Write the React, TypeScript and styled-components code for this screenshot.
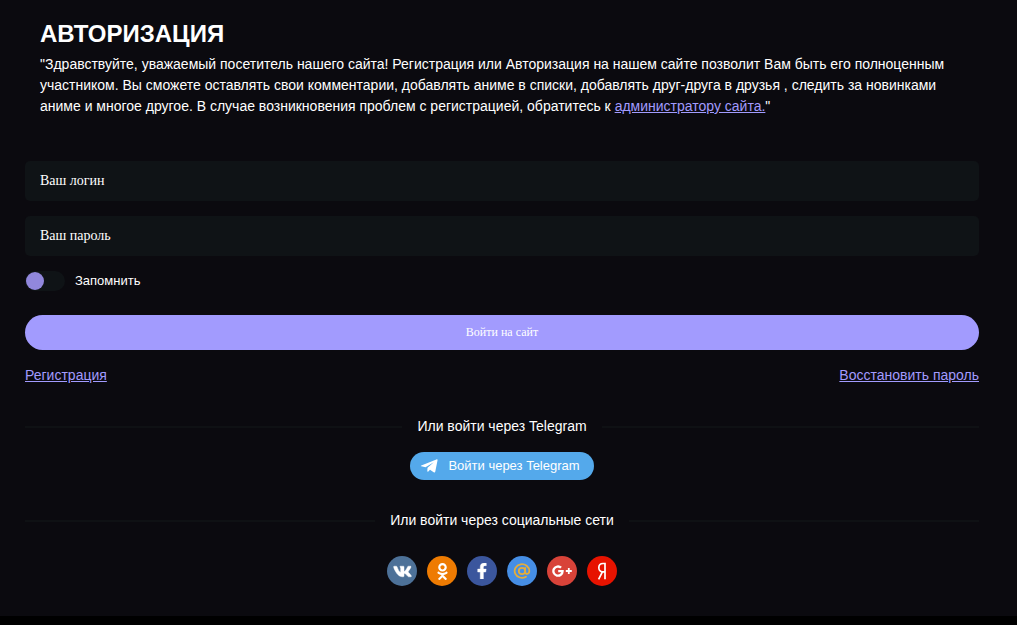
import React from "react";
import styled, { createGlobalStyle } from "styled-components";
import { FaVk, FaOdnoklassniki, FaFacebookF } from "react-icons/fa";

const GlobalStyle = createGlobalStyle`
  * { box-sizing: border-box; }
  body {
    margin: 0;
    background: #000;
    color: #fff;
    font: 14px/21px "Liberation Sans", Arial, sans-serif;
  }
`;

const Page = styled.main`
  background: #0b0a0f;
  padding: 19px 38px 30px 25px;
`;

const Intro = styled.header`
  padding: 0 15px;
`;

const Title = styled.h1`
  margin: 0 0 5px;
  font-size: 24px;
  line-height: 30px;
  text-transform: uppercase;
`;

const Text = styled.p`
  margin: 0;
`;

const Link = styled.a`
  color: #a29bfe;
  text-decoration: underline;
`;

const Form = styled.form`
  display: flex;
  flex-direction: column;
  gap: 15px;
  margin-top: 44px;
`;

const Field = styled.input`
  width: 100%;
  height: 40px;
  padding: 0 15px;
  border: 0;
  border-radius: 5px;
  background: #0f1316;
  color: #fff;
  font: 14px "Liberation Serif", "Times New Roman", serif;
  &::placeholder {
    color: #fff;
    opacity: 1;
  }
`;

const Remember = styled.label`
  display: flex;
  align-items: flex-start;
  align-self: flex-start;
  gap: 10px;
  height: 20px;
  font-size: 13px;
  line-height: 19px;
  cursor: pointer;
`;

const Toggle = styled.input`
  appearance: none;
  display: flex;
  align-items: center;
  width: 40px;
  height: 20px;
  margin: 0;
  padding: 1px;
  border-radius: 10px;
  background: #0f1316;
  cursor: pointer;
  &::before {
    content: "";
    width: 18px;
    height: 18px;
    border-radius: 50%;
    background: #9187dc;
  }
  &:checked {
    justify-content: flex-end;
  }
`;

const Submit = styled.button`
  height: 35px;
  margin-top: 9px;
  border: 0;
  border-radius: 18px;
  background: #a29bfe;
  color: #fff;
  font: 12px "Liberation Serif", "Times New Roman", serif;
  cursor: pointer;
`;

const Links = styled.nav`
  display: flex;
  justify-content: space-between;
`;

const Divider = styled.h2`
  display: flex;
  align-items: center;
  gap: 15px;
  margin: 30px 0 15px;
  font-size: 14px;
  font-weight: 400;
  line-height: 21px;
  &::before,
  &::after {
    content: "";
    flex: 1;
    height: 2px;
    background: #0f1114;
  }
`;

const Center = styled.div`
  display: flex;
  justify-content: center;
  gap: 10px;
`;

const TelegramButton = styled.button`
  display: flex;
  align-items: center;
  gap: 10px;
  height: 28px;
  padding: 0 14px 1px 10px;
  border: 0;
  border-radius: 14px;
  background: #54a9eb;
  color: #fff;
  font: 500 13px "Liberation Sans", Arial, sans-serif;
  cursor: pointer;
`;

const Social = styled.a<{ $color: string }>`
  display: flex;
  align-items: center;
  justify-content: center;
  width: 30px;
  height: 30px;
  border-radius: 50%;
  background: ${(p) => p.$color};
  color: #fff;
`;

const Socials = styled(Center)`
  margin-top: 25px;
`;

const TelegramIcon = () => (
  <svg width="18" height="14" viewBox="0 0 18 14" fill="currentColor">
    <path d="M1.3 6.5 16.4.4c.8-.3 1.3.1 1.1 1L15.300 12.600c-.2 1-.8 1.200-1.600.7L10 10.700 8.300 12.500c-.5.5-1 .3-1-.5l.2-3.200L13.800 3.200 5.500 8.300 1.300 7.300C.7 7.100.7 6.800 1.300 6.500Z" />
  </svg>
);

const AtIcon = () => (
  <svg width="18" height="18" viewBox="0 0 18 18" fill="none" stroke="#e3ad3c" strokeWidth="1.8" strokeLinecap="round">
    <circle cx="9" cy="9" r="3.200" />
    <path d="M12.200 6v4.100c0 2.700 4.100 2.400 4.100-1.100A7.300 6.800 0 1 0 13 14.700" />
  </svg>
);

const GooglePlusIcon = () => (
  <svg width="20" height="12" viewBox="0 0 20 12" fill="none" stroke="#fff">
    <path d="M9.100 2.700A4.600 4.600 0 1 0 10.600 6.200H6.200" strokeWidth="2.300" />
    <path d="M16.800 3v6M13.800 6h6" strokeWidth="1.800" />
  </svg>
);

const YandexIcon = () => (
  <svg width="18" height="20" viewBox="0 0 18 20" fill="none" stroke="#fff" strokeWidth="1.700">
    <path d="M12 18.300V2.500H10C4.500 2.500 4.500 10.800 9.500 10.800H12M9.400 10.800L5.600 18.300" />
  </svg>
);

const socials = [
  { name: "ВКонтакте", color: "#4d7198", icon: <FaVk size={19} stroke="currentColor" strokeWidth={14} /> },
  { name: "Одноклассники", color: "#ee7b02", icon: <FaOdnoklassniki size={17} /> },
  { name: "Facebook", color: "#3b569d", icon: <FaFacebookF size={16} stroke="currentColor" strokeWidth={14} /> },
  { name: "Mail.ru", color: "#468ee5", icon: <AtIcon /> },
  { name: "Google+", color: "#d84339", icon: <GooglePlusIcon /> },
  { name: "Яндекс", color: "#e71300", icon: <YandexIcon /> },
];

export default function App() {
  return (
    <>
      <GlobalStyle />
      <Page>
        <Intro>
          <Title>Авторизация</Title>
          <Text>
            "Здравствуйте, уважаемый посетитель нашего сайта! Регистрация или Авторизация на нашем сайте позволит Вам
            быть его полноценным участником. Вы сможете оставлять свои комментарии, добавлять аниме в списки, добавлять
            друг-друга в друзья , следить за новинками аниме и многое другое. В случае возникновения проблем с
            регистрацией, обратитесь к <Link href="#admin">администратору сайта.</Link>"
          </Text>
        </Intro>
        <Form onSubmit={(e) => e.preventDefault()}>
          <Field type="text" name="login" placeholder="Ваш логин" aria-label="Ваш логин" />
          <Field type="password" name="password" placeholder="Ваш пароль" aria-label="Ваш пароль" />
          <Remember>
            <Toggle type="checkbox" name="remember" />
            Запомнить
          </Remember>
          <Submit type="submit">Войти на сайт</Submit>
          <Links>
            <Link href="#register">Регистрация</Link>
            <Link href="#restore">Восстановить пароль</Link>
          </Links>
        </Form>
        <Divider>Или войти через Telegram</Divider>
        <Center>
          <TelegramButton type="button">
            <TelegramIcon />
            Войти через Telegram
          </TelegramButton>
        </Center>
        <Divider>Или войти через социальные сети</Divider>
        <Socials>
          {socials.map((s) => (
            <Social key={s.name} href={`#${s.name}`} $color={s.color} aria-label={s.name}>
              {s.icon}
            </Social>
          ))}
        </Socials>
      </Page>
    </>
  );
}
